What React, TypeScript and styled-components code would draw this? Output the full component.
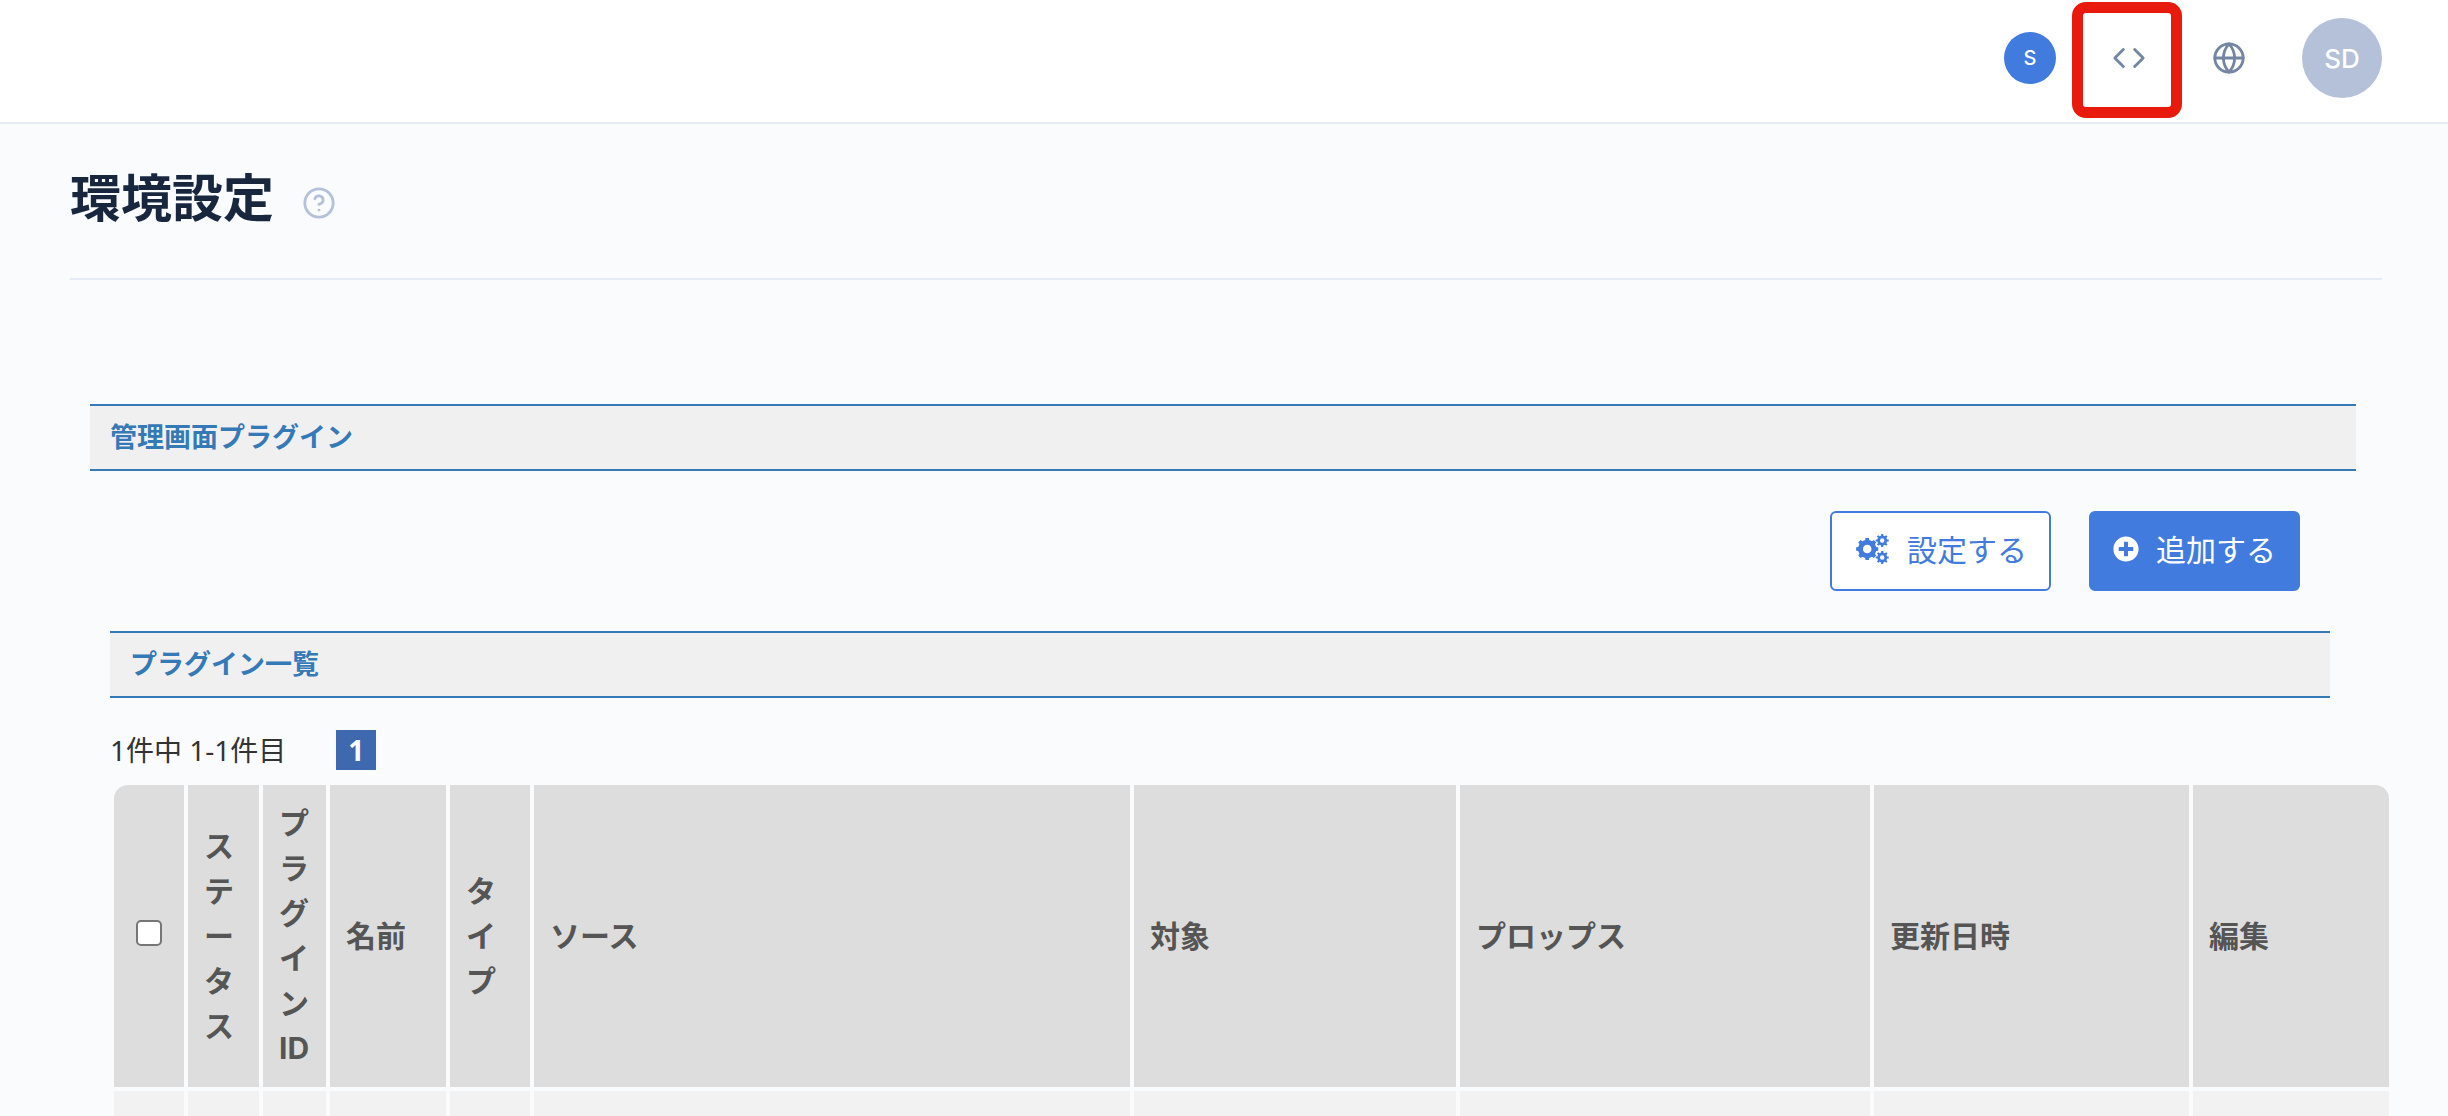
import React from 'react';
import styled, { createGlobalStyle } from 'styled-components';
import { FiCode, FiGlobe, FiHelpCircle } from 'react-icons/fi';
import { FaPlusCircle } from 'react-icons/fa';

const color = {
  page: '#fafbfd',
  line: '#e5ebf5',
  primary: '#427bde',
  section: '#3579b7',
  muted: '#7385a2',
  pale: '#b5c1d8',
  title: '#18263e',
  mark: '#e8190d',
};

const GlobalStyle = createGlobalStyle`
  *, *::before, *::after { box-sizing: border-box; }
  html { scrollbar-width: none; }
  body {
    margin: 0;
    background: ${color.page};
    font-family: Inter, "Noto Sans CJK JP", sans-serif;
  }
  button { font-family: inherit; cursor: pointer; }
`;

const Shell = styled.div`
  height: 100vh;
  overflow-y: auto;
  scrollbar-width: none;
`;

const TopBar = styled.header`
  display: flex;
  align-items: center;
  justify-content: flex-end;
  height: 124px;
  padding: 0 66px 6px;
  background: #fff;
  border-bottom: 2px solid ${color.line};
`;

const RoundButton = styled.button<{ $size: number; $fill: string; $text: number }>`
  width: ${(p) => p.$size}px;
  height: ${(p) => p.$size}px;
  padding: 0;
  border: 0;
  border-radius: 50%;
  background: ${(p) => p.$fill};
  color: #fff;
  font-size: ${(p) => p.$text}px;
  font-weight: 500;
`;

const IconButton = styled.button`
  display: flex;
  align-items: center;
  justify-content: center;
  padding: 0;
  border: 0;
  background: none;
  color: ${color.muted};
  font-size: 34px;
`;

const MarkedButton = styled(IconButton)`
  width: 110px;
  height: 116px;
  margin: 4px 30px 0 16px;
  padding: 0 0 4px 4px;
  border: 11px solid ${color.mark};
  border-radius: 14px;
`;

const LanguageButton = styled(IconButton)`
  margin-right: 56px;
`;

const PageHead = styled.div`
  display: flex;
  align-items: center;
  gap: 28px;
  height: 156px;
  margin: 0 66px 0 70px;
  padding-bottom: 4px;
  border-bottom: 2px solid ${color.line};
`;

const Title = styled.h1`
  margin: 0;
  color: ${color.title};
  font-size: 51px;
  font-weight: 700;
  line-height: 72px;
`;

const HelpButton = styled(IconButton)`
  margin-top: 8px;
  color: ${color.pale};
`;

const Panel = styled.main`
  margin: 124px 92px 0 90px;
`;

const SectionTitle = styled.h2`
  margin: 0;
  padding: 0 20px;
  border: solid ${color.section};
  border-width: 2px 0;
  background: #f0f0f0;
  color: ${color.section};
  font-size: 27px;
  font-weight: 700;
  line-height: 63px;
`;

const PanelBody = styled.section`
  margin: 0 26px 0 20px;
`;

const Actions = styled.div`
  display: flex;
  justify-content: flex-end;
  gap: 38px;
  padding: 40px 30px;
`;

const ActionButton = styled.button<{ $solid?: boolean }>`
  display: flex;
  align-items: center;
  gap: 17px;
  height: 80px;
  padding: 0 22px 4px;
  border: 2px solid ${color.primary};
  border-radius: 6px;
  background: ${(p) => (p.$solid ? color.primary : '#fff')};
  color: ${(p) => (p.$solid ? '#fff' : color.primary)};
  font-size: 30px;
  white-space: nowrap;

  svg { flex: none; }
`;

const ActionLabel = styled.span`
  padding-bottom: 3px;
`;

const Pager = styled.div`
  display: flex;
  align-items: center;
  gap: 50px;
  margin-top: 32px;
  color: #333;
  font-family: "Noto Sans", "Noto Sans CJK JP", sans-serif;
  font-size: 28px;
  line-height: 40px;
`;

const PageLink = styled.a`
  width: 40px;
  height: 40px;
  background: #3e69ae;
  color: #fff;
  font-weight: 700;
  text-align: center;
  text-decoration: none;
`;

const TableWrap = styled.div`
  margin: 11px -63px 0 0;
`;

const Table = styled.table`
  width: 100%;
  table-layout: fixed;
  border-collapse: separate;
  border-spacing: 4px;
`;

const Col = styled.col<{ $width?: number }>`
  width: ${(p) => (p.$width ? `${p.$width}px` : 'auto')};
`;

const HeadCell = styled.th`
  padding: 16px;
  background: #ddd;
  color: #555;
  font-size: 30px;
  font-weight: 700;
  line-height: 45px;
  text-align: left;
  vertical-align: middle;
  word-break: break-all;

  &:first-child { border-top-left-radius: 14px; text-align: center; }
  &:last-child { border-top-right-radius: 14px; }
`;

const BodyCell = styled.td`
  height: 64px;
  background: #f2f2f2;
`;

const Check = styled.input`
  appearance: none;
  display: block;
  width: 26px;
  height: 26px;
  margin: 0 auto 6px;
  border: 2px solid #767676;
  border-radius: 5px;
  background: #fff;
`;

/** Outline of a toothed wheel followed by its round hole. */
function gear(cx: number, cy: number, outer: number, root: number, hole: number) {
  const teeth = 8;
  const step = (Math.PI * 2) / teeth;
  const at = (r: number, a: number) =>
    `${(cx + r * Math.cos(a)).toFixed(2)} ${(cy + r * Math.sin(a)).toFixed(2)}`;
  const points: string[] = [];
  for (let i = 0; i < teeth; i += 1) {
    const a = i * step;
    points.push(at(root, a - step * 0.28), at(outer, a - step * 0.2));
    points.push(at(outer, a + step * 0.2), at(root, a + step * 0.28));
  }
  return (
    `M${points.join('L')}Z` +
    `M${cx - hole} ${cy}a${hole} ${hole} 0 1 0 ${hole * 2} 0a${hole} ${hole} 0 1 0 ${-hole * 2} 0Z`
  );
}

function CogsIcon() {
  return (
    <svg width="36" height="32" viewBox="-2 0 36 32" fill="currentColor" fillRule="evenodd" aria-hidden="true">
      <path d={gear(11.2, 16, 11.2, 9.2, 4.3)} />
      <path d={gear(26.2, 7.5, 6.6, 5, 2.2)} />
      <path d={gear(26.2, 24.5, 6.6, 5, 2.2)} />
    </svg>
  );
}

const columns: { name: string; width?: number }[] = [
  { name: '', width: 70 },
  { name: 'ステータス', width: 71 },
  { name: 'プラグインID', width: 63 },
  { name: '名前', width: 116 },
  { name: 'タイプ', width: 80 },
  { name: 'ソース' },
  { name: '対象', width: 322 },
  { name: 'プロップス', width: 410 },
  { name: '更新日時', width: 315 },
  { name: '編集', width: 196 },
];

export default function App() {
  return (
    <Shell>
      <GlobalStyle />
      <TopBar>
        <RoundButton type="button" $size={52} $fill={color.primary} $text={20}>S</RoundButton>
        <MarkedButton type="button" aria-label="コード"><FiCode /></MarkedButton>
        <LanguageButton type="button" aria-label="言語"><FiGlobe /></LanguageButton>
        <RoundButton type="button" $size={80} $fill={color.pale} $text={26}>SD</RoundButton>
      </TopBar>
      <PageHead>
        <Title>環境設定</Title>
        <HelpButton type="button" aria-label="ヘルプ"><FiHelpCircle /></HelpButton>
      </PageHead>
      <Panel>
        <SectionTitle>管理画面プラグイン</SectionTitle>
        <PanelBody>
          <Actions>
            <ActionButton type="button">
              <CogsIcon />
              <ActionLabel>設定する</ActionLabel>
            </ActionButton>
            <ActionButton type="button" $solid>
              <FaPlusCircle size={26} />
              <ActionLabel>追加する</ActionLabel>
            </ActionButton>
          </Actions>
          <SectionTitle>プラグイン一覧</SectionTitle>
          <Pager>
            <span>1件中 1-1件目</span>
            <PageLink href="#1" aria-current="page">1</PageLink>
          </Pager>
          <TableWrap>
            <Table>
              <colgroup>
                {columns.map((c) => <Col key={c.name} $width={c.width} />)}
              </colgroup>
              <thead>
                <tr>
                  {columns.map((c) => (
                    <HeadCell key={c.name} scope="col">
                      {c.name || <Check type="checkbox" aria-label="すべて選択" />}
                    </HeadCell>
                  ))}
                </tr>
              </thead>
              <tbody>
                <tr>
                  {columns.map((c) => <BodyCell key={c.name} />)}
                </tr>
              </tbody>
            </Table>
          </TableWrap>
        </PanelBody>
      </Panel>
    </Shell>
  );
}
